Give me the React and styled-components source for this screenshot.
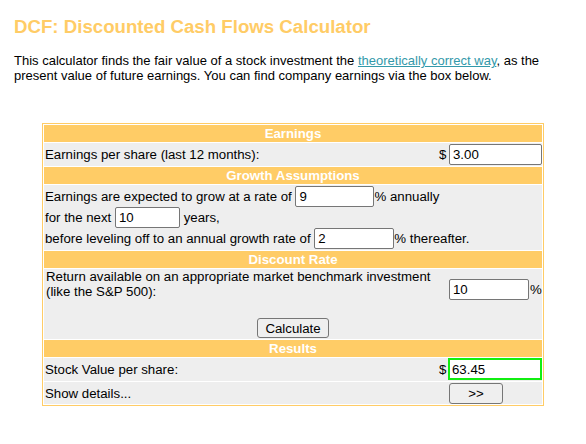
import React from "react";
import styled, { createGlobalStyle } from "styled-components";

const GlobalStyle = createGlobalStyle`
  body {
    margin: 0;
    background: #fff;
    color: #000;
    font-family: "Liberation Sans", Arial, sans-serif;
  }
`;

export default function App() {
  return (
    <Page>
      <GlobalStyle />
      <Title>DCF: Discounted Cash Flows Calculator</Title>
      <Intro>
        This calculator finds the fair value of a stock investment the{" "}
        <Link href="#">theoretically correct way</Link>, as the present value of
        future earnings. You can find company earnings via the box below.
      </Intro>

      <Calculator>
        <SectionHead>Earnings</SectionHead>
        <Row>
          <Label>Earnings per share (last 12 months):</Label>
          <Value>
            <Prefix>$</Prefix>
            <Field defaultValue="3.00" />
          </Value>
        </Row>

        <SectionHead>Growth Assumptions</SectionHead>
        <Block>
          <Line>
            {"Earnings are expected to grow at a rate of "}
            <Field $w={79} defaultValue="9" />
            {"% annually"}
          </Line>
          <Line>
            {"for the next "}
            <Field $w={65} defaultValue="10" />
            {" years,"}
          </Line>
          <Line>
            {"before leveling off to an annual growth rate of "}
            <Field $w={80} defaultValue="2" />
            {"% thereafter."}
          </Line>
        </Block>

        <SectionHead>Discount Rate</SectionHead>
        <Block>
          <DiscountGrid>
            <Label $top>
              Return available on an appropriate market benchmark investment
              (like the S&amp;P 500):
            </Label>
            <Value>
              <Prefix />
              <Field $w={80} defaultValue="10" />
              <Suffix>%</Suffix>
            </Value>
          </DiscountGrid>
          <Actions>
            <Button $w={72}>Calculate</Button>
          </Actions>
        </Block>

        <SectionHead>Results</SectionHead>
        <Row>
          <Label>Stock Value per share:</Label>
          <Value>
            <Prefix>$</Prefix>
            <ResultField defaultValue="63.45" />
          </Value>
        </Row>
        <Row $last>
          <Label>Show details...</Label>
          <Value>
            <Prefix />
            <Button $w={54} $h={21}>&gt;&gt;</Button>
          </Value>
        </Row>
      </Calculator>
    </Page>
  );
}

//Styling components

const Page = styled.div`
  padding: 16px 14px 0;
`;

const Title = styled.h1`
  margin: 0;
  font-size: 18.67px;
  line-height: 21px;
  font-weight: bold;
  color: #ffcc66;
`;

const Intro = styled.p`
  margin: 16px 0 0;
  font-size: 13px;
  line-height: 15px;
`;

const Link = styled.a`
  color: #3399aa;
  text-decoration: underline;
`;

const Calculator = styled.div`
  width: 502px;
  box-sizing: border-box;
  margin: 40px auto 0;
  border: 1px solid #ffcc66;
  padding: 1px;
  background: #fff;
  display: flex;
  flex-direction: column;
  gap: 1px;
  font-size: 13.25px;
`;

const SectionHead = styled.div`
  height: 17px;
  line-height: 17px;
  background: #ffcc66;
  color: #fff;
  font-weight: bold;
  text-align: center;
`;

const Row = styled.div`
  display: grid;
  grid-template-columns: 394px 104px;
  align-items: center;
  background: #eeeeee;
  padding: 1px 0 ${(p) => (p.$last ? "0" : "1px")};
`;

const Label = styled.div`
  padding-left: 1px;
  line-height: 15px;
  align-self: ${(p) => (p.$top ? "start" : "center")};
`;

const Value = styled.div`
  display: flex;
  align-items: center;
  padding-left: 1px;
`;

const Prefix = styled.span`
  width: 10px;
  flex: none;
`;

const Suffix = styled.span`
  margin-left: 1px;
`;

const Field = styled.input`
  box-sizing: border-box;
  width: ${(p) => p.$w || 93}px;
  height: 21px;
  margin: 0;
  padding: 0 3px;
  border: 1px solid #767676;
  border-radius: 2px;
  background: #fff;
  font-family: "Liberation Sans", Arial, sans-serif;
  font-size: 13.25px;
  color: #000;
  outline: none;
`;

const ResultField = styled(Field)`
  width: 94px;
  height: 22px;
  margin: -1px 0 0 -1px;
  padding: 0 2px;
  border: 2px solid #11ee11;
  border-radius: 0;
`;

const Block = styled.div`
  background: #eeeeee;
  padding: 1px;
`;

const Line = styled.div`
  display: flex;
  align-items: center;
  height: 21px;
  white-space: pre;
`;

const DiscountGrid = styled.div`
  display: grid;
  grid-template-columns: 393px 104px;
  align-items: center;
  min-height: 40px;
  margin-top: -1px;
`;

const Actions = styled.div`
  display: flex;
  justify-content: center;
  align-items: flex-end;
  height: 29px;
`;

const Button = styled.button`
  box-sizing: border-box;
  width: ${(p) => p.$w}px;
  height: ${(p) => p.$h || 20}px;
  margin: 0;
  padding: 0;
  border: 1px solid #767676;
  border-radius: 3px;
  background: #efefef;
  color: #000;
  font-family: "Liberation Sans", Arial, sans-serif;
  font-size: 13.25px;
`;
